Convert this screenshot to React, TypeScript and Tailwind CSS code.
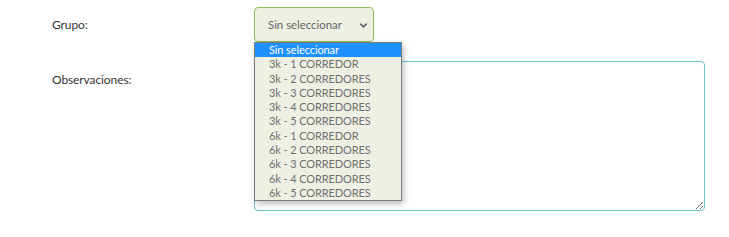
import { ChevronDown } from "lucide-react";

const OPTIONS = [
  "Sin seleccionar",
  "3k - 1 CORREDOR",
  "3k - 2 CORREDORES",
  "3k - 3 CORREDORES",
  "3k - 4 CORREDORES",
  "3k - 5 CORREDORES",
  "6k - 1 CORREDOR",
  "6k - 2 CORREDORES",
  "6k - 3 CORREDORES",
  "6k - 4 CORREDORES",
  "6k - 5 CORREDORES",
];

export default function App() {
  return (
    <div
      className="h-[237px] w-[729px] bg-white text-[12px] text-[#333]"
      style={{ fontFamily: "Lato, 'Open Sans', sans-serif" }}
    >
      <div className="flex flex-col gap-[19px] pt-[7px]">
        <div className="flex items-start">
          <div className="w-[254px] pl-[52px] pt-[10px] leading-[15px] tracking-[-0.1px]">Grupo:</div>
          <div className="relative">
            <div className="flex h-[35px] w-[120px] items-center justify-between rounded-[4px] border border-[#8fbf5a] bg-[#eef0e4] pl-[13px] pr-[4px] pt-[1px] text-[#666]">
              <span className="text-[11.4px]">Sin seleccionar</span>
              <ChevronDown size={11} strokeWidth={3.5} className="text-[#666]" />
            </div>
            <ul className="absolute left-0 top-[35px] z-10 w-[148px] border border-[#7a7a7a] bg-[#eef0e4] shadow-[2px_3px_6px_rgba(0,0,0,0.25)]">
              {OPTIONS.map((o, i) => (
                <li
                  key={o}
                  className={
                    i === 0
                      ? "h-[14.3px] bg-[#1e90ff] pl-[14px] text-[11px] leading-[14.3px] tracking-[-0.1px] text-white"
                      : "h-[14.3px] pl-[14px] text-[11px] leading-[14.3px] tracking-[-0.1px] text-[#707070]"
                  }
                >
                  {o}
                </li>
              ))}
            </ul>
          </div>
        </div>
        <div className="flex items-start">
          <div className="w-[254px] pl-[52px] pt-[11px] leading-[15px] tracking-[-0.1px]">Observaciones:</div>
          <textarea className="h-[150px] w-[451px] rounded-[4px] border border-[#6cc3cc] bg-white" />
        </div>
      </div>
    </div>
  );
}
